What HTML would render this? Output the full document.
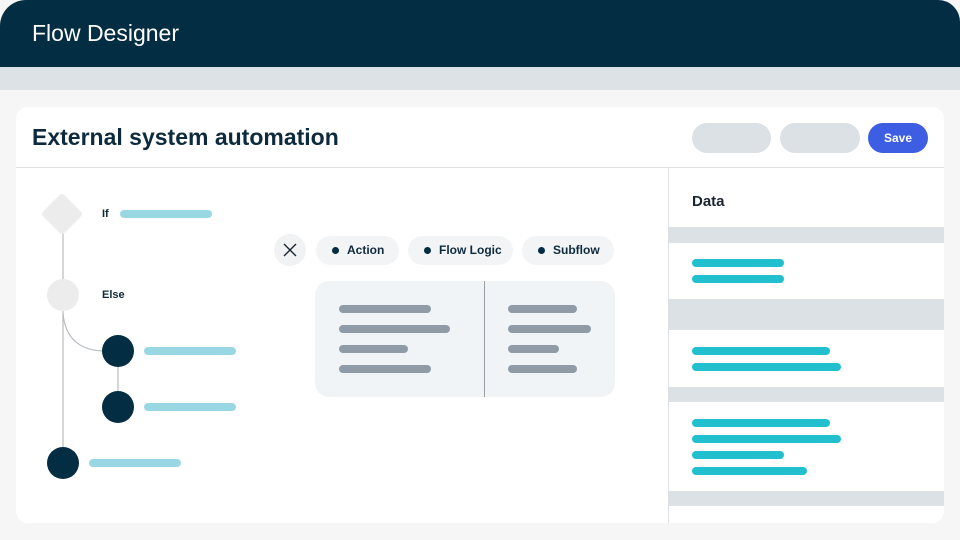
<!DOCTYPE html>
<html><head><style>
body{margin:0;width:960px;height:540px;background:#f6f6f6;position:relative;overflow:hidden;font-family:"Liberation Sans",sans-serif}
.a{position:absolute}
.hdr{left:0;top:0;width:960px;height:67px;background:#032d42;border-top-left-radius:26px;border-top-right-radius:22px}
.hdr span{position:absolute;left:32px;top:20px;color:#fff;font-size:23px}
.band{left:0;top:67px;width:960px;height:23px;background:#dce2e5}
.card{left:16px;top:107px;width:928px;height:416px;background:#fff;border-radius:12px;overflow:hidden}
.t{color:#0d2b3d;font-weight:bold}
.bar{position:absolute;height:8px;border-radius:4px}
.g{background:#8f9ca8}.c{background:#22bfcf}.l{background:#99d8e3}
.chip{position:absolute;top:236px;height:29px;background:#f3f4f5;border-radius:15px;font-size:12px;font-weight:bold;color:#0d2b3d;line-height:29px;box-sizing:border-box;padding-left:31px}
.chip:before{content:"";position:absolute;left:16px;top:11px;width:7px;height:7px;border-radius:50%;background:#032d42}
.btn{position:absolute;top:123px;height:30px;border-radius:15px;background:#dbe1e4}
.gr{position:absolute;left:669px;width:275px;background:#dbe1e4}
</style></head><body>
<div class="a hdr"><span>Flow Designer</span></div>
<div class="a band"></div>
<div class="a card"></div>
<div class="a t" style="left:32px;top:124px;font-size:23px">External system automation</div>
<div class="btn" style="left:692px;width:79px"></div>
<div class="btn" style="left:780px;width:80px"></div>
<div class="btn" style="left:868px;width:60px;background:#3d5ee3;color:#fff;font-size:12px;font-weight:bold;text-align:center;line-height:30px">Save</div>
<div class="a" style="left:16px;top:167px;width:928px;height:1px;background:#dde0e2"></div>
<div class="a" style="left:668px;top:168px;width:1px;height:355px;background:#dde0e2"></div>
<div class="a t" style="left:692px;top:193px;font-size:15px;color:#1b2530">Data</div>
<div class="gr" style="top:227px;height:16px"></div>
<div class="gr" style="top:299px;height:31px"></div>
<div class="gr" style="top:387px;height:15px"></div>
<div class="gr" style="top:491px;height:15px"></div>
<div class="bar c" style="left:692px;top:259px;width:92px"></div>
<div class="bar c" style="left:692px;top:275px;width:92px"></div>
<div class="bar c" style="left:692px;top:347px;width:138px"></div>
<div class="bar c" style="left:692px;top:363px;width:149px"></div>
<div class="bar c" style="left:692px;top:419px;width:138px"></div>
<div class="bar c" style="left:692px;top:435px;width:149px"></div>
<div class="bar c" style="left:692px;top:451px;width:92px"></div>
<div class="bar c" style="left:692px;top:467px;width:115px"></div>
<svg class="a" style="left:0;top:0" width="960" height="540">
<line x1="63" y1="230" x2="63" y2="450" stroke="#b8bcc0" stroke-width="1.2"/>
<path d="M63 313 Q66 349 102 351" fill="none" stroke="#b8bcc0" stroke-width="1.2"/>
<line x1="118" y1="351" x2="118" y2="407" stroke="#b8bcc0" stroke-width="1.2"/>
<rect x="47" y="199" width="30" height="30" rx="3" fill="#ececec" transform="rotate(45 62 214)"/>
<circle cx="63" cy="295" r="16" fill="#ececec"/>
<circle cx="118" cy="351" r="16" fill="#032d42"/>
<circle cx="118" cy="407" r="16" fill="#032d42"/>
<circle cx="63" cy="463" r="16" fill="#032d42"/>
<circle cx="290" cy="250" r="16" fill="#f1f2f3"/>
<path d="M284 244L296 256M296 244L284 256" stroke="#1b2530" stroke-width="1.4"/>
<rect x="315" y="281" width="300" height="116" rx="14" fill="#f1f4f7"/>
<line x1="484.5" y1="281" x2="484.5" y2="397" stroke="#9aa0a6" stroke-width="1"/>
</svg>
<div class="a t" style="left:102px;top:208px;font-size:11px">If</div>
<div class="a t" style="left:102px;top:289px;font-size:11px">Else</div>
<div class="bar l" style="left:120px;top:210px;width:92px"></div>
<div class="bar l" style="left:144px;top:347px;width:92px"></div>
<div class="bar l" style="left:144px;top:403px;width:92px"></div>
<div class="bar l" style="left:89px;top:459px;width:92px"></div>
<div class="chip" style="left:316px;width:83px">Action</div>
<div class="chip" style="left:408px;width:105px">Flow Logic</div>
<div class="chip" style="left:522px;width:92px">Subflow</div>
<div class="bar g" style="left:339px;top:305px;width:92px"></div>
<div class="bar g" style="left:339px;top:325px;width:111px"></div>
<div class="bar g" style="left:339px;top:345px;width:69px"></div>
<div class="bar g" style="left:339px;top:365px;width:92px"></div>
<div class="bar g" style="left:508px;top:305px;width:69px"></div>
<div class="bar g" style="left:508px;top:325px;width:83px"></div>
<div class="bar g" style="left:508px;top:345px;width:51px"></div>
<div class="bar g" style="left:508px;top:365px;width:69px"></div>
</body></html>
